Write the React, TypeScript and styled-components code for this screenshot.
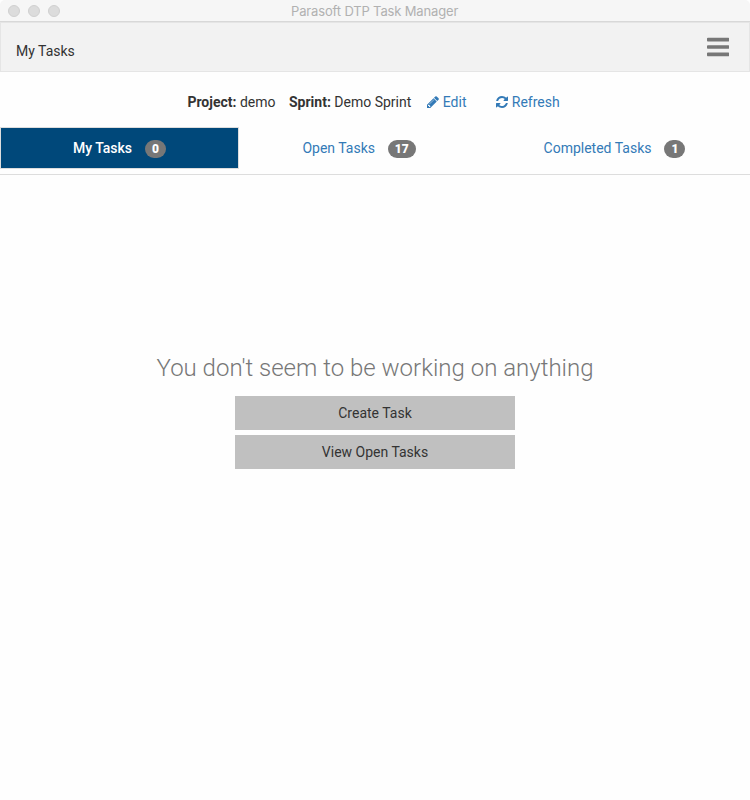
import React from "react";
import styled, { createGlobalStyle, css } from "styled-components";

const GlobalStyle = createGlobalStyle`
  * { box-sizing: border-box; }
  html, body { margin: 0; background: #fff; }
  body {
    font-family: Roboto, "Liberation Sans", sans-serif;
    font-size: 14px;
    line-height: 20px;
    color: #333;
    -webkit-font-smoothing: antialiased;
  }
`;

const Window = styled.div`
  width: 750px;
  height: 800px;
  display: flex;
  flex-direction: column;
  overflow: hidden;
  background: #fefefe;
`;

const TitleBar = styled.header`
  flex: none;
  display: grid;
  grid-template-columns: 1fr auto 1fr;
  align-items: center;
  height: 22px;
  padding: 0 8px;
  border-bottom: 1px solid #d8d8d8;
  border-radius: 5px 5px 0 0;
  background: #f6f6f6;
`;

const WindowControls = styled.div`
  display: flex;
  gap: 8px;
`;

const Control = styled.span`
  width: 12px;
  height: 12px;
  border: 1px solid #d0d0d0;
  border-radius: 50%;
  background: #dcdcdc;
`;

const WindowTitle = styled.span`
  width: 168px;
  font-family: Inter, Roboto, sans-serif;
  font-size: 13px;
  letter-spacing: -0.15px;
  padding-top: 1px;
  color: #b1b1b1;
  white-space: nowrap;
`;

const NavBar = styled.nav`
  flex: none;
  display: flex;
  align-items: center;
  justify-content: space-between;
  height: 50px;
  padding: 8px 20px 0 15px;
  border: 1px solid #e5e5e5;
  background: #f2f2f2;
`;

const MenuButton = styled.button`
  display: flex;
  margin-top: -8px;
  padding: 0;
  border: 0;
  background: none;
  color: #777;
`;

const ProjectInfo = styled.div`
  flex: none;
  display: flex;
  align-items: center;
  height: 20px;
  margin: 20px 0 15px;
  padding-left: 187.4px;
  white-space: pre;
`;

const Field = styled.span<{ $width: number }>`
  width: ${(p) => p.$width}px;
`;

const Action = styled.a<{ $width?: number }>`
  display: flex;
  align-items: center;
  gap: 3.6px;
  width: ${(p) => (p.$width ? `${p.$width}px` : "auto")};
  color: #337ab7;
`;

const Glyph = styled.svg<{ $size: number }>`
  display: block;
  width: ${(p) => (p.$size * 6) / 7}px;
  height: ${(p) => p.$size}px;
  fill: currentColor;
`;

const Tabs = styled.div`
  flex: none;
  display: grid;
  grid-template-columns: 239px 240px 271px;
  height: 48px;
  border-bottom: 1px solid #ddd;
`;

const Tab = styled.a<{ $active?: boolean }>`
  display: flex;
  align-items: center;
  justify-content: center;
  gap: 13px;
  height: 42px;
  border: 1px solid transparent;
  color: #337ab7;
  ${(p) =>
    p.$active &&
    css`
      border-color: #ddd;
      background: #00487a;
      color: #fff;
      font-weight: 500;
    `}
`;

const Badge = styled.span`
  min-width: 21px;
  margin-top: 1px;
  padding: 3px 6.8px;
  border-radius: 10px;
  background: #777;
  color: #fff;
  font-size: 12px;
  font-weight: 900;
  line-height: 12px;
  text-align: center;
`;

const EmptyState = styled.main`
  display: flex;
  flex-direction: column;
  align-items: center;
  gap: 5px;
  padding-top: 178px;
`;

const Message = styled.h1`
  margin: 0 0 8px;
  font-size: 24px;
  font-weight: 300;
  line-height: 30px;
  color: #777;
  white-space: nowrap;
`;

const WideButton = styled.button`
  width: 280px;
  height: 34px;
  padding: 0;
  border: 0;
  background: #c0c0c0;
  color: #333;
  font: inherit;
`;

const BarsIcon = () => (
  <Glyph $size={26} viewBox="0 0 1536 1792">
    <path d="M1536 1344v128q0 26-19 45t-45 19h-1408q-26 0-45-19t-19-45v-128q0-26 19-45t45-19h1408q26 0 45 19t19 45zm0-512v128q0 26-19 45t-45 19h-1408q-26 0-45-19t-19-45v-128q0-26 19-45t45-19h1408q26 0 45 19t19 45zm0-512v128q0 26-19 45t-45 19h-1408q-26 0-45-19t-19-45v-128q0-26 19-45t45-19h1408q26 0 45 19t19 45z" />
  </Glyph>
);

const PencilIcon = () => (
  <Glyph $size={14} viewBox="0 0 1536 1792">
    <path d="M363 1536l91-91-235-235-91 91v107h128v128h107zm523-928q0-22-22-22-10 0-17 7l-542 542q-7 7-7 17 0 22 22 22 10 0 17-7l542-542q7-7 7-17zm-54-192l416 416-832 832h-416v-416zm683 96q0 53-37 90l-166 166-416-416 166-165q36-38 90-38 53 0 91 38l235 234q37 39 37 91z" />
  </Glyph>
);

const RefreshIcon = () => (
  <Glyph $size={14} viewBox="0 0 1536 1792">
    <path d="M1511 1056q0 5-1 7-64 268-268 434.5t-478 166.5q-146 0-282.5-55t-243.5-157l-129 129q-19 19-45 19t-45-19-19-45v-448q0-26 19-45t45-19h448q26 0 45 19t19 45-19 45l-137 137q71 66 161 102t187 36q134 0 250-65t186-179q11-17 53-117 8-23 30-23h192q13 0 22.5 9.5t9.5 22.5zm25-800v448q0 26-19 45t-45 19h-448q-26 0-45-19t-19-45 19-45l138-138q-148-137-349-137-134 0-250 65t-186 179q-11 17-53 117-8 23-30 23h-199q-13 0-22.5-9.5t-9.5-22.5v-7q65-268 270-434.5t480-166.5q146 0 284 55.5t245 156.5l130-129q19-19 45-19t45 19 19 45z" />
  </Glyph>
);

const tabs = [
  { label: "My Tasks", count: 0, active: true },
  { label: "Open Tasks", count: 17 },
  { label: "Completed Tasks", count: 1 },
];

export default function App() {
  return (
    <>
      <GlobalStyle />
      <Window>
        <TitleBar>
          <WindowControls>
            <Control />
            <Control />
            <Control />
          </WindowControls>
          <WindowTitle>Parasoft DTP Task Manager</WindowTitle>
        </TitleBar>
        <NavBar>
          <span>My Tasks</span>
          <MenuButton aria-label="Menu">
            <BarsIcon />
          </MenuButton>
        </NavBar>
        <ProjectInfo>
          <Field $width={101.6}>
            <b>Project:</b> demo
          </Field>
          <Field $width={138.2}>
            <b>Sprint:</b> Demo Sprint
          </Field>
          <Action $width={69}>
            <PencilIcon />
            Edit
          </Action>
          <Action>
            <RefreshIcon />
            Refresh
          </Action>
        </ProjectInfo>
        <Tabs>
          {tabs.map((tab) => (
            <Tab key={tab.label} $active={tab.active}>
              {tab.label}
              <Badge>{tab.count}</Badge>
            </Tab>
          ))}
        </Tabs>
        <EmptyState>
          <Message>You don't seem to be working on anything</Message>
          <WideButton>Create Task</WideButton>
          <WideButton>View Open Tasks</WideButton>
        </EmptyState>
      </Window>
    </>
  );
}
